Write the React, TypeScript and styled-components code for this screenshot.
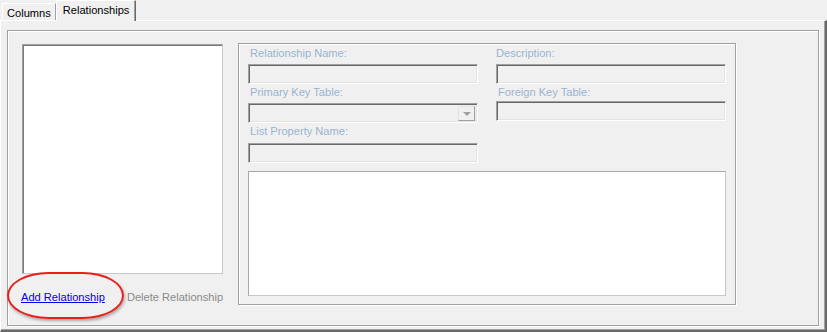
import styled, { createGlobalStyle } from 'styled-components'

const GlobalStyle = createGlobalStyle`
  body {
    margin: 0;
    background: #f0f0f0;
    font-family: "Liberation Sans", Arial, sans-serif;
    font-size: 11.1px;
  }
`

const Window = styled.div`
  width: 827px;
  height: 332px;
  display: flex;
  flex-direction: column;
  box-sizing: border-box;
  background: #f0f0f0;
`

const TabStrip = styled.div`
  display: flex;
  align-items: flex-end;
  height: 20px;
  padding-left: 2px;
  position: relative;
  z-index: 1;
`

const Tab = styled.div<{ $active?: boolean }>`
  box-sizing: border-box;
  height: ${({ $active }) => ($active ? '21px' : '17px')};
  margin-bottom: ${({ $active }) => ($active ? '-1px' : '0')};
  padding: ${({ $active }) => ($active ? '2px 6px 0 6px' : '2px 4px 0 4px')};
  background: #f0f0f0;
  border-top: 1px solid #fff;
  border-left: 1px solid #fff;
  border-right: 1px solid ${({ $active }) => ($active ? '#696969' : '#a0a0a0')};
  box-shadow: ${({ $active }) => ($active ? 'inset -1px 0 #a0a0a0' : 'none')};
  color: #000;
  line-height: 14px;
  white-space: nowrap;
`

const TabPanel = styled.div`
  flex: 1;
  display: flex;
  box-sizing: border-box;
  border-top: 1px solid #fff;
  border-left: 1px solid #fff;
  border-right: 2px solid #696969;
  border-bottom: 2px solid #696969;
  box-shadow: inset -1px -1px #a0a0a0;
  padding: 9px 6px 4px 6px;
`

const GroupBox = styled.div`
  flex: 1;
  box-sizing: border-box;
  border: 1px solid #a0a0a0;
  box-shadow: inset 1px 1px #fff, 1px 1px #fff;
  padding: 12px 0 0 14px;
  display: grid;
  grid-template-columns: 201px 498px;
  column-gap: 15px;
  align-items: start;
`

const LeftColumn = styled.div`
  display: flex;
  flex-direction: column;
  margin-top: 1px;
`

const ListBox = styled.div`
  box-sizing: border-box;
  height: 230px;
  background: #fff;
  border: 1px solid;
  border-color: #a0a0a0 #c8c8c8 #c8c8c8 #a0a0a0;
  box-shadow: inset 1px 1px #7a7a7a;
`

const LinkRow = styled.div`
  display: flex;
  align-items: center;
  height: 14px;
  margin-top: 16px;
  margin-left: -1px;
  gap: 22px;
`

const LinkWrap = styled.span`
  position: relative;
  display: inline-block;
`

const Link = styled.a<{ $disabled?: boolean }>`
  color: ${({ $disabled }) => ($disabled ? '#8a8a8a' : '#0000ee')};
  text-decoration: ${({ $disabled }) => ($disabled ? 'none' : 'underline')};
  cursor: pointer;
  white-space: nowrap;
`

const Highlight = styled.span`
  position: absolute;
  left: -14px;
  top: -19px;
  width: 117px;
  height: 47px;
  box-sizing: border-box;
  border: 2px solid #e8201c;
  border-radius: 42px / 24px;
  box-shadow: 1px 2px 3px rgba(0, 0, 0, 0.3);
  pointer-events: none;
`

const DetailPanel = styled.div`
  box-sizing: border-box;
  height: 262px;
  border: 1px solid #a0a0a0;
  box-shadow: inset 1px 1px #fff, 1px 1px #fff;
  padding: 1px 0 0 9px;
  display: flex;
  flex-direction: column;
`

const FieldGrid = styled.div`
  display: grid;
  grid-template-columns: 230px 230px;
  column-gap: 18px;
  align-items: start;
`

const FieldColumn = styled.div`
  display: flex;
  flex-direction: column;
`

const Label = styled.div<{ $h?: number; $indent?: number }>`
  height: ${({ $h }) => $h ?? 19}px;
  padding-left: ${({ $indent }) => $indent ?? 2}px;
  color: #99b4d1;
  line-height: 14px;
  box-sizing: border-box;
  padding-top: 1px;
  white-space: nowrap;
`

const TextBox = styled.div`
  box-sizing: border-box;
  height: 20px;
  background: #f0f0f0;
  border: 1px solid;
  border-color: #a0a0a0 #fff #fff #a0a0a0;
  box-shadow: inset 1px 1px #696969, inset -1px -1px #e3e3e3;
  display: flex;
  justify-content: flex-end;
  padding: 2px 2px 1px 0;
`

const DropButton = styled.div`
  box-sizing: border-box;
  width: 17px;
  height: 100%;
  border: 1px solid;
  border-color: #e3e3e3 #a0a0a0 #a0a0a0 #e3e3e3;
  display: flex;
  align-items: center;
  justify-content: center;
`

const Arrow = styled.span`
  width: 0;
  height: 0;
  border-left: 4px solid transparent;
  border-right: 4px solid transparent;
  border-top: 4px solid #a0a0a0;
`

const TextArea = styled.div`
  box-sizing: border-box;
  width: 478px;
  height: 125px;
  margin-top: 8px;
  background: #fff;
  border: 1px solid;
  border-color: #a8a8a8 #c8c8c8 #c8c8c8 #a8a8a8;
`

export default function App() {
  return (
    <Window>
      <GlobalStyle />
      <TabStrip>
        <Tab>Columns</Tab>
        <Tab $active>Relationships</Tab>
      </TabStrip>
      <TabPanel>
        <GroupBox>
          <LeftColumn>
            <ListBox />
            <LinkRow>
              <LinkWrap>
                <Highlight />
                <Link>Add Relationship</Link>
              </LinkWrap>
              <Link $disabled>Delete Relationship</Link>
            </LinkRow>
          </LeftColumn>
          <DetailPanel>
            <FieldGrid>
              <FieldColumn>
                <Label>Relationship Name:</Label>
                <TextBox />
                <Label>Primary Key Table:</Label>
                <TextBox>
                  <DropButton>
                    <Arrow />
                  </DropButton>
                </TextBox>
                <Label $h={20}>List Property Name:</Label>
                <TextBox />
              </FieldColumn>
              <FieldColumn>
                <Label $indent={0}>Description:</Label>
                <TextBox />
                <Label $h={17} $indent={2}>Foreign Key Table:</Label>
                <TextBox />
              </FieldColumn>
            </FieldGrid>
            <TextArea />
          </DetailPanel>
        </GroupBox>
      </TabPanel>
    </Window>
  )
}
